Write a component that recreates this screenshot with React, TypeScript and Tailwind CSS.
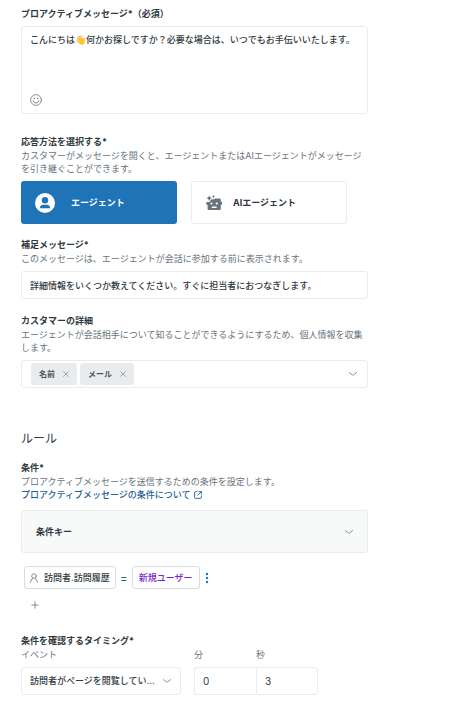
import { useState, type ReactNode, type SVGProps } from "react";

const fontStack = "font-['Inter','Noto_Sans_CJK_JP',sans-serif]";

const initialDetails = ["名前", "メール"];

function ChevronIcon({ className = "" }: { className?: string }) {
  return (
    <svg viewBox="0 0 10 6" fill="none" stroke="#87929d" strokeLinecap="round" className={`h-1.5 w-2.5 ${className}`}>
      <path d="M1.4 1.6 4.3 3.9a1.1 1.1 0 0 0 1.4 0L8.6 1.6" />
    </svg>
  );
}

function SmileIcon(props: SVGProps<SVGSVGElement>) {
  return (
    <svg viewBox="0 0 12 12" fill="none" stroke="#68737d" strokeLinecap="round" {...props}>
      <circle cx="6" cy="6" r="5.4" strokeWidth="0.8" />
      <path d="M3.2 6.9a2.9 2.9 0 0 0 5.6 0" strokeWidth="0.9" />
      <circle cx="4.2" cy="4.5" r="0.75" fill="#68737d" stroke="none" />
      <circle cx="7.8" cy="4.5" r="0.75" fill="#68737d" stroke="none" />
    </svg>
  );
}

function AgentIcon() {
  return (
    <svg viewBox="0 0 20 20" className="size-5">
      <circle cx="10" cy="10" r="10" fill="#fff" />
      <circle cx="10" cy="7.2" r="3.2" fill="#1f73b7" />
      <path d="M5 15.2v-.7c0-1.7 1.3-2.8 3-2.8h4c1.7 0 3 1.1 3 2.8v.7z" fill="#1f73b7" />
    </svg>
  );
}

function BotIcon() {
  return (
    <svg viewBox="0 0 16 16" className="size-4" fill="#68737d">
      <path d="M3.2.4 4.1 2.3 6 3.2 4.1 4.1 3.2 6 2.3 4.1.4 3.2 2.3 2.3z" />
      <path d="M7.4 0 7.9 1.1 9 1.6 7.9 2.1 7.4 3.2 6.9 2.1 5.8 1.6 6.9 1.1z" />
      <path
        fillRule="evenodd"
        d="M9 3.4h4.4a1.4 1.4 0 0 1 1.4 1.4v2H16v3h-1.2V14a1 1 0 0 1-1 1H2.6a1 1 0 0 1-1-1V9.8H.4V7h3.4l1-2.2 2-.6h1.4zM5.5 7.4a1.1 1.1 0 1 0 0 2.2 1.1 1.1 0 0 0 0-2.2zm5.3 0a1.1 1.1 0 1 0 0 2.2 1.1 1.1 0 0 0 0-2.2zM5.8 11.6v1.3h4.8v-1.3z"
      />
    </svg>
  );
}

function UserIcon() {
  return (
    <svg viewBox="0 0 8 10" fill="none" stroke="#68737d" strokeWidth="0.8" strokeLinecap="round" className="h-2.5 w-2">
      <circle cx="4" cy="3.1" r="2.3" />
      <path d="M.6 9.4c0-2 .9-3.2 2.2-4M7.4 9.4c0-2-.9-3.2-2.2-4" />
    </svg>
  );
}

function ExternalIcon() {
  return (
    <svg viewBox="0 0 8 8" fill="none" stroke="#1f5f95" strokeWidth="0.9" strokeLinecap="round" className="size-2">
      <path d="M3 .7H1.3a.7.7 0 0 0-.7.7v5.3c0 .4.3.7.7.7h5.3c.4 0 .7-.3.7-.7V5M4.9.6h2.5v2.5M7.3.7 3.8 4.2" />
    </svg>
  );
}

function Label({ htmlFor, children }: { htmlFor?: string; children: ReactNode }) {
  return (
    <label htmlFor={htmlFor} className="block font-bold leading-[15px]">
      {children}
    </label>
  );
}

function Hint({ children }: { children: ReactNode }) {
  return <p className="leading-[13px] text-[#68737d]">{children}</p>;
}

export default function App() {
  const [method, setMethod] = useState("agent");
  const [details, setDetails] = useState(initialDetails);

  return (
    <main
      lang="ja"
      className={`${fontStack} min-h-screen bg-white pt-1.5 pr-[82px] pb-3 pl-[21px] text-[9px] text-[#2f3941]`}
    >
      <section>
        <Label htmlFor="message">プロアクティブメッセージ*（必須）</Label>
        <div className="mt-[5px] flex h-[88px] flex-col rounded-[3px] border border-[#e9ebed] px-2 pt-1.5 pb-[7px]">
          <textarea
            id="message"
            className="w-full flex-1 resize-none font-medium leading-[14px] outline-none"
            defaultValue="こんにちは👋何かお探しですか？必要な場合は、いつでもお手伝いいたします。"
          />
          <button type="button" aria-label="絵文字" className="size-3">
            <SmileIcon className="size-3" />
          </button>
        </div>
      </section>

      <section className="mt-5">
        <h3 className="font-bold leading-[15px]">応答方法を選択する*</h3>
        <Hint>
          カスタマーがメッセージを開くと、エージェントまたはAIエージェントがメッセージを引き継ぐことができます。
        </Hint>
        <div className="mt-1.5 mr-[21px] grid grid-cols-2 gap-3.5">
          <button
            type="button"
            aria-pressed={method === "agent"}
            onClick={() => setMethod("agent")}
            className="flex h-[43px] items-center gap-4 rounded-[3px] bg-[#1f73b7] px-3.5 font-bold text-white"
          >
            <AgentIcon />
            エージェント
          </button>
          <button
            type="button"
            aria-pressed={method === "ai"}
            onClick={() => setMethod("ai")}
            className="flex h-[43px] items-center gap-[11px] rounded-[3px] border border-[#e9ebed] px-3.5 font-bold"
          >
            <BotIcon />
            AIエージェント
          </button>
        </div>
      </section>

      <section className="mt-[13px]">
        <Label htmlFor="followup">補足メッセージ*</Label>
        <Hint>このメッセージは、エージェントが会話に参加する前に表示されます。</Hint>
        <input
          id="followup"
          type="text"
          className="mt-1.5 block h-7 w-full rounded-[3px] border border-[#e9ebed] px-2 font-medium outline-none"
          defaultValue="詳細情報をいくつか教えてください。すぐに担当者におつなぎします。"
        />
      </section>

      <section className="mt-3.5">
        <h3 className="font-bold leading-[15px]">カスタマーの詳細</h3>
        <Hint>
          エージェントが会話相手について知ることができるようにするため、個人情報を収集します。
        </Hint>
        <div className="mt-1.5 flex h-7 items-center gap-[3px] rounded-[3px] border border-[#e9ebed] px-[9px]">
          {details.map((detail) => (
            <span
              key={detail}
              className="flex h-[22px] items-center gap-2 rounded-[3px] bg-[#e9ebed] px-2 text-[8px] font-bold text-[#49545c]"
            >
              {detail}
              <button
                type="button"
                aria-label={`${detail}を削除`}
                onClick={() => setDetails(details.filter((item) => item !== detail))}
              >
                <svg viewBox="0 0 6 6" stroke="#87929d" strokeWidth="0.8" strokeLinecap="round" className="size-1.5">
                  <path d="M.6.6l4.8 4.8M5.4.6.6 5.4" />
                </svg>
              </button>
            </span>
          ))}
          <button type="button" aria-label="詳細を選択" className="ml-auto">
            <ChevronIcon />
          </button>
        </div>
      </section>

      <h2 className="mt-[42px] text-xs leading-[17px]">ルール</h2>

      <section className="mt-[13px]">
        <Label htmlFor="condition">条件*</Label>
        <Hint>プロアクティブメッセージを送信するための条件を設定します。</Hint>
        <a href="#conditions" className="flex items-center gap-[3px] font-medium leading-[13px] text-[#1f5f95]">
          プロアクティブメッセージの条件について
          <ExternalIcon />
        </a>
        <div className="mt-[9px] grid items-center">
          <select
            id="condition"
            className="col-start-1 row-start-1 h-[43px] w-full appearance-none rounded-[3px] border border-[#e9ebed] bg-[#f8f9f9] px-3.5 font-bold outline-none"
          >
            <option>条件キー</option>
          </select>
          <ChevronIcon className="pointer-events-none col-start-1 row-start-1 mr-3.5 justify-self-end" />
        </div>

        <div className="mt-[13px] ml-[3px] flex items-center font-medium">
          <button type="button" className="flex h-[23px] items-center gap-1.5 rounded-[3px] border border-[#d8dcde] px-[5px]">
            <UserIcon />
            訪問者.訪問履歴
          </button>
          <span className="w-4 text-center text-[11px] leading-4 text-[#038153]">=</span>
          <button type="button" className="h-[23px] rounded-[3px] border border-[#d8dcde] px-1.5 text-[#7a28cb]">
            新規ユーザー
          </button>
          <button type="button" aria-label="その他" className="ml-[5px]">
            <svg viewBox="0 0 4 12" fill="#1f73b7" className="h-3 w-1">
              <circle cx="2" cy="2" r="1.2" />
              <circle cx="2" cy="6" r="1.2" />
              <circle cx="2" cy="10" r="1.2" />
            </svg>
          </button>
        </div>
        <button type="button" aria-label="条件を追加" className="mt-3 ml-2.5 block">
          <svg viewBox="0 0 8 8" stroke="#68737d" strokeWidth="0.8" strokeLinecap="round" className="size-2">
            <path d="M4 .8v6.4M.8 4h6.4" />
          </svg>
        </button>
      </section>

      <section className="mt-6">
        <h3 className="font-bold leading-[15px]">条件を確認するタイミング*</h3>
        <div className="flex">
          <div className="mr-[13px] w-40">
            <label htmlFor="event" className="block leading-[13px] text-[#68737d]">
              イベント
            </label>
            <div className="mt-1.5 grid items-center">
              <select
                id="event"
                className="col-start-1 row-start-1 h-7 w-full appearance-none rounded-[3px] border border-[#e9ebed] px-2 font-medium outline-none"
              >
                <option>訪問者がページを閲覧してい...</option>
              </select>
              <ChevronIcon className="pointer-events-none col-start-1 row-start-1 mr-[9px] justify-self-end" />
            </div>
          </div>
          <div className="w-[62px]">
            <label htmlFor="minutes" className="block leading-[13px] text-[#68737d]">
              分
            </label>
            <input
              id="minutes"
              inputMode="numeric"
              defaultValue="0"
              className="mt-1.5 block h-7 w-full rounded-l-[3px] border border-r-0 border-[#e9ebed] px-2 text-[10px] outline-none"
            />
          </div>
          <div className="w-[62px]">
            <label htmlFor="seconds" className="block leading-[13px] text-[#68737d]">
              秒
            </label>
            <input
              id="seconds"
              inputMode="numeric"
              defaultValue="3"
              className="mt-1.5 block h-7 w-full rounded-r-[3px] border border-[#e9ebed] px-2 text-[10px] outline-none"
            />
          </div>
        </div>
      </section>
    </main>
  );
}
